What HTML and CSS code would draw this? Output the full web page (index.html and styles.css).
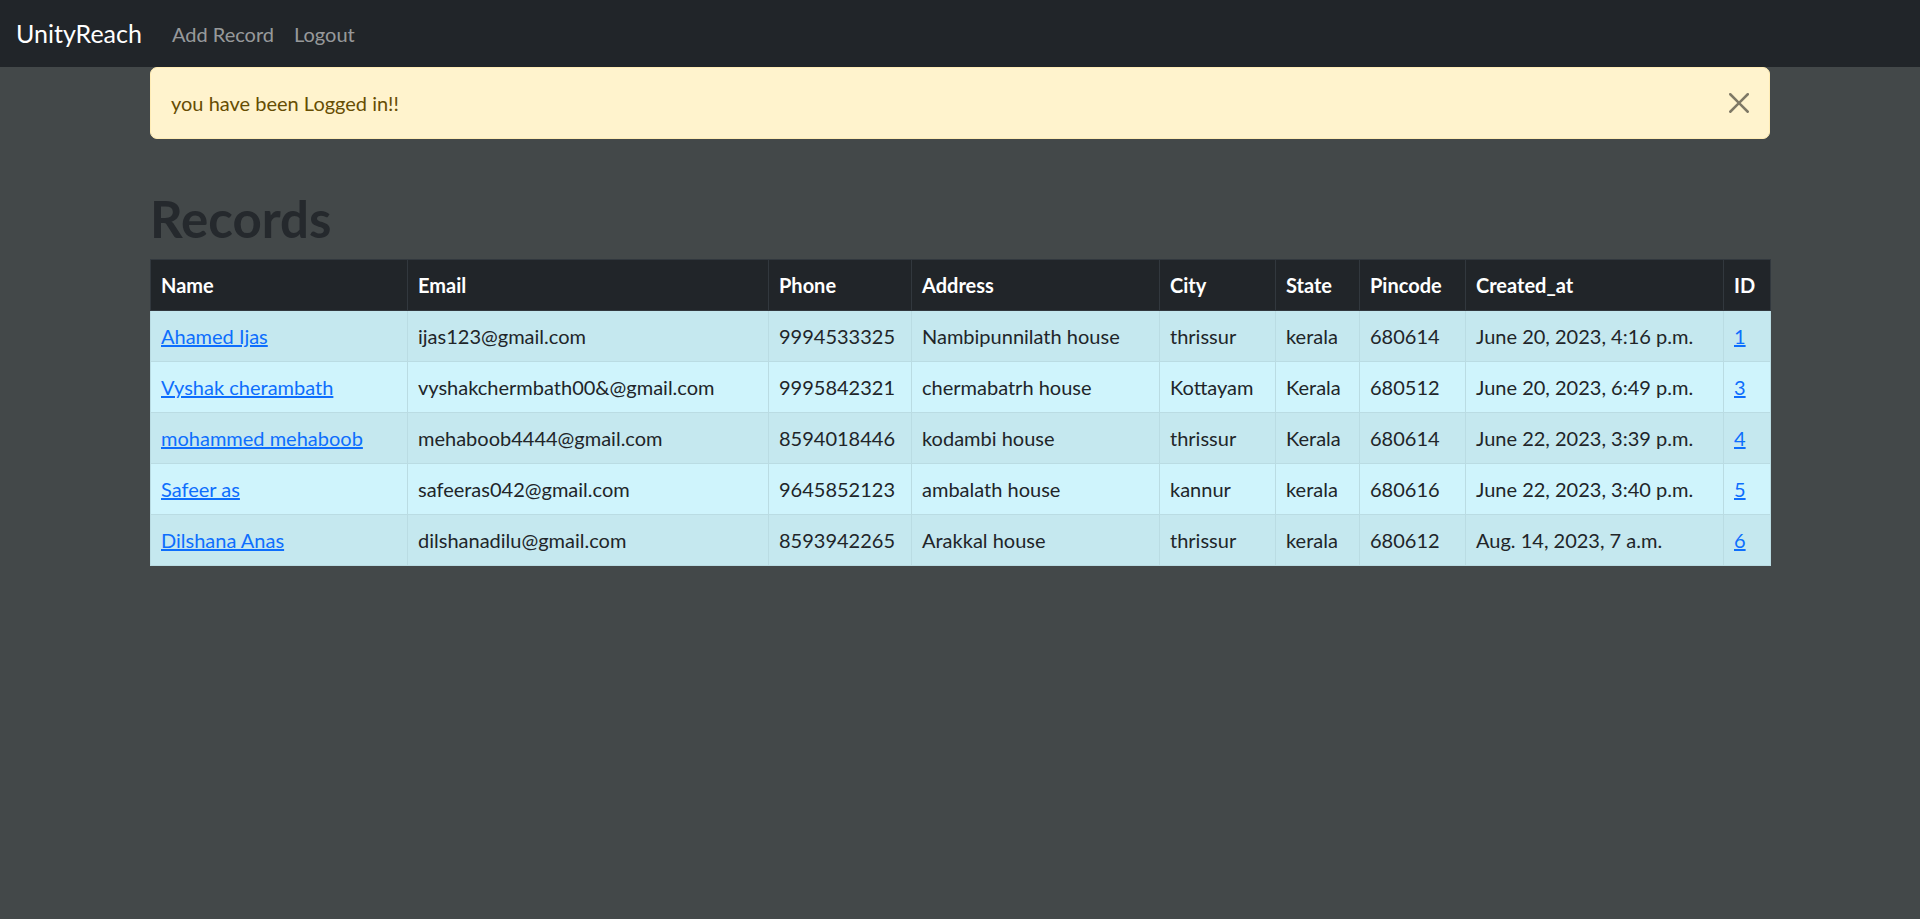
FILE: index.html
```html
<!DOCTYPE html>
<html lang="en">
<head>
<meta charset="utf-8">
<title>UnityReach</title>
<link rel="stylesheet" href="styles.css">
</head>
<body>
<nav class="navbar">
  <a class="brand" href="#">UnityReach</a>
  <ul class="nav-links">
    <li><a class="nav-link" href="#">Add Record</a></li>
    <li><a class="nav-link" href="#">Logout</a></li>
  </ul>
</nav>
<main class="container">
  <div class="alert">
    you have been Logged in!!
    <button class="btn-close" type="button" aria-label="Close">
      <svg viewBox="0 0 16 16" width="20" height="20"><path d="M.293.293a1 1 0 0 1 1.414 0L8 6.586 14.293.293a1 1 0 1 1 1.414 1.414L9.414 8l6.293 6.293a1 1 0 0 1-1.414 1.414L8 9.414l-6.293 6.293a1 1 0 0 1-1.414-1.414L6.586 8 .293 1.707a1 1 0 0 1 0-1.414z"/></svg>
    </button>
  </div>
  <h1 class="title">Records</h1>
  <table class="records">
    <colgroup>
      <col class="c-name"><col class="c-email"><col class="c-phone"><col class="c-address"><col class="c-city"><col class="c-state"><col class="c-pin"><col class="c-created"><col class="c-id">
    </colgroup>
    <thead>
      <tr><th>Name</th><th>Email</th><th>Phone</th><th>Address</th><th>City</th><th>State</th><th>Pincode</th><th>Created_at</th><th>ID</th></tr>
    </thead>
    <tbody>
      <tr><td><a href="#">Ahamed Ijas</a></td><td>ijas123@gmail.com</td><td>9994533325</td><td>Nambipunnilath house</td><td>thrissur</td><td>kerala</td><td>680614</td><td>June 20, 2023, 4:16 p.m.</td><td><a href="#">1</a></td></tr>
      <tr><td><a href="#">Vyshak cherambath</a></td><td>vyshakchermbath00&amp;@gmail.com</td><td>9995842321</td><td>chermabatrh house</td><td>Kottayam</td><td>Kerala</td><td>680512</td><td>June 20, 2023, 6:49 p.m.</td><td><a href="#">3</a></td></tr>
      <tr><td><a href="#">mohammed mehaboob</a></td><td>mehaboob4444@gmail.com</td><td>8594018446</td><td>kodambi house</td><td>thrissur</td><td>Kerala</td><td>680614</td><td>June 22, 2023, 3:39 p.m.</td><td><a href="#">4</a></td></tr>
      <tr><td><a href="#">Safeer as</a></td><td>safeeras042@gmail.com</td><td>9645852123</td><td>ambalath house</td><td>kannur</td><td>kerala</td><td>680616</td><td>June 22, 2023, 3:40 p.m.</td><td><a href="#">5</a></td></tr>
      <tr><td><a href="#">Dilshana Anas</a></td><td>dilshanadilu@gmail.com</td><td>8593942265</td><td>Arakkal house</td><td>thrissur</td><td>kerala</td><td>680612</td><td>Aug. 14, 2023, 7 a.m.</td><td><a href="#">6</a></td></tr>
    </tbody>
  </table>
</main>
</body>
</html>
```
FILE: styles.css
```css
* { box-sizing: border-box; }
html, body { margin: 0; padding: 0; }
body {
  background: #434849;
  color: #212529;
  font-family: Lato, "Open Sans", "Liberation Sans", sans-serif;
  font-size: 20px;
  line-height: 1.5;
  min-height: 919px;
}
.navbar {
  height: 67px;
  background: #212529;
  display: flex;
  align-items: center;
  padding: 0 16px;
}
.brand {
  color: #fff;
  font-size: 25px;
  line-height: 37px;
  text-decoration: none;
  margin-right: 20px;
}
.nav-links {
  display: flex;
  list-style: none;
  margin: 0;
  padding: 0;
}
.nav-link {
  display: block;
  padding: 0 10px;
  color: rgba(255,255,255,0.55);
  text-decoration: none;
  font-size: 20px;
}
.container {
  max-width: 1650px;
  margin: 0 auto;
  padding: 0 15px;
}
.alert {
  position: relative;
  background: #fff3cd;
  border: 1px solid #ffecb5;
  color: #664d03;
  border-radius: 7px;
  padding: 20px 60px 20px 20px;
  margin-bottom: 20px;
}
.btn-close {
  position: absolute;
  top: 0;
  right: 0;
  padding: 25px 20px;
  border: 0;
  background: transparent;
  line-height: 0;
  cursor: pointer;
}
.btn-close svg { display: block; fill: #000; opacity: 0.5; }
.title {
  font-size: 51px;
  font-weight: 700;
  line-height: 1.2;
  margin: 49px 0 10px;
  color: #25292d;
}
.records {
  width: 100%;
  border-collapse: collapse;
  table-layout: fixed;
}
.c-name { width: 257px; }
.c-email { width: 361px; }
.c-phone { width: 143px; }
.c-address { width: 248px; }
.c-city { width: 116px; }
.c-state { width: 84px; }
.c-pin { width: 106px; }
.c-created { width: 258px; }
.c-id { width: 47px; }
.records th, .records td {
  padding: 10px 10px;
  text-align: left;
  vertical-align: top;
  white-space: nowrap;
}
.records th {
  background: #212529;
  color: #fff;
  font-weight: 700;
  border: 1px solid #32383e;
}
.records td {
  border: 1px solid #badce3;
  background: #cff4fc;
}
.records tbody tr:nth-child(odd) td { background: #c5e8ef; }
.records a { color: #0d6efd; text-decoration: underline; }
```
